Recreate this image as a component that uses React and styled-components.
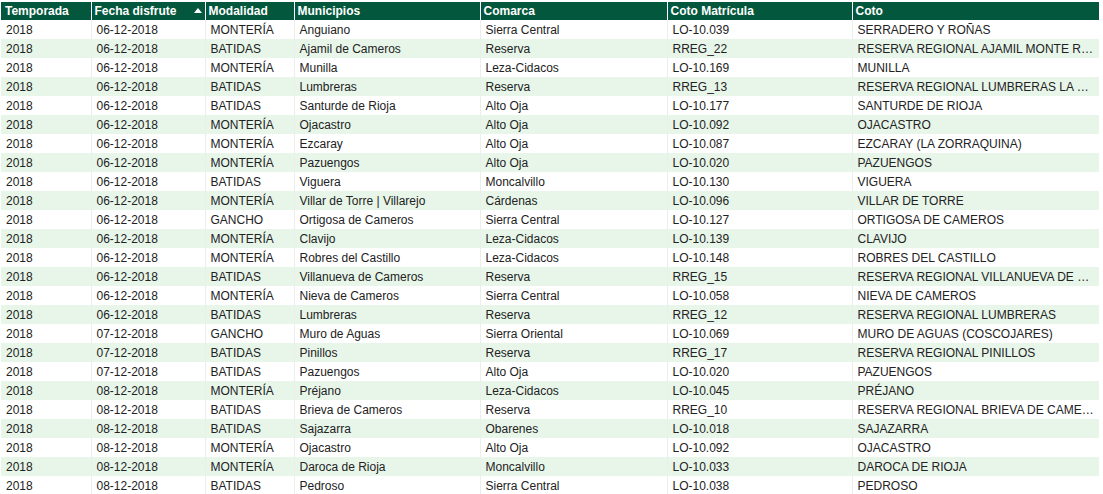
import React from "react";
import styled, { createGlobalStyle } from "styled-components";

const Global = createGlobalStyle`
  html, body { margin: 0; padding: 0; background: #fff; }
  body { font-family: "Liberation Sans", Arial, sans-serif; }
`;

const Wrap = styled.div`
  padding: 2px 4px 0 1px;
`;

const Table = styled.table`
  width: 1098px;
  table-layout: fixed;
  border-collapse: collapse;
  font-size: 12px;
  color: #222;
`;

const HeadCell = styled.th`
  background: #03573c;
  color: #fff;
  font-weight: bold;
  text-align: left;
  height: 18px;
  padding: 0 4px 0 3px;
  border-left: 1px solid #fff;
  white-space: nowrap;
  overflow: hidden;
  position: relative;
  &:first-child { border-left: none; padding-left: 4px; }
`;

const SortArrow = styled.span`
  position: absolute;
  right: 3px;
  top: 6px;
  width: 0;
  height: 0;
  border-left: 4px solid transparent;
  border-right: 4px solid transparent;
  border-bottom: 5px solid #fff;
`;

const Row = styled.tr`
  background: ${(p) => (p.$striped ? "#e8f6ea" : "#fff")};
`;

const Cell = styled.td`
  height: 19px;
  padding: 0 4px 0 5px;
  border-left: 1px solid #eceeec;
  white-space: nowrap;
  overflow: hidden;
  text-overflow: ellipsis;
  &:first-child { border-left: none; }
`;

const cols = [90, 114, 89, 186, 187, 185, 247];
const heads = ["Temporada", "Fecha disfrute", "Modalidad", "Municipios", "Comarca", "Coto Matrícula", "Coto"];

const rows = [
  ["06-12-2018", "MONTERÍA", "Anguiano", "Sierra Central", "LO-10.039", "SERRADERO Y ROÑAS"],
  ["06-12-2018", "BATIDAS", "Ajamil de Cameros", "Reserva", "RREG_22", "RESERVA REGIONAL AJAMIL MONTE REAL"],
  ["06-12-2018", "MONTERÍA", "Munilla", "Leza-Cidacos", "LO-10.169", "MUNILLA"],
  ["06-12-2018", "BATIDAS", "Lumbreras", "Reserva", "RREG_13", "RESERVA REGIONAL LUMBRERAS LA PAZ"],
  ["06-12-2018", "BATIDAS", "Santurde de Rioja", "Alto Oja", "LO-10.177", "SANTURDE DE RIOJA"],
  ["06-12-2018", "MONTERÍA", "Ojacastro", "Alto Oja", "LO-10.092", "OJACASTRO"],
  ["06-12-2018", "MONTERÍA", "Ezcaray", "Alto Oja", "LO-10.087", "EZCARAY (LA ZORRAQUINA)"],
  ["06-12-2018", "MONTERÍA", "Pazuengos", "Alto Oja", "LO-10.020", "PAZUENGOS"],
  ["06-12-2018", "BATIDAS", "Viguera", "Moncalvillo", "LO-10.130", "VIGUERA"],
  ["06-12-2018", "MONTERÍA", "Villar de Torre | Villarejo", "Cárdenas", "LO-10.096", "VILLAR DE TORRE"],
  ["06-12-2018", "GANCHO", "Ortigosa de Cameros", "Sierra Central", "LO-10.127", "ORTIGOSA DE CAMEROS"],
  ["06-12-2018", "MONTERÍA", "Clavijo", "Leza-Cidacos", "LO-10.139", "CLAVIJO"],
  ["06-12-2018", "MONTERÍA", "Robres del Castillo", "Leza-Cidacos", "LO-10.148", "ROBRES DEL CASTILLO"],
  ["06-12-2018", "BATIDAS", "Villanueva de Cameros", "Reserva", "RREG_15", "RESERVA REGIONAL VILLANUEVA DE CAMEROS"],
  ["06-12-2018", "MONTERÍA", "Nieva de Cameros", "Sierra Central", "LO-10.058", "NIEVA DE CAMEROS"],
  ["06-12-2018", "BATIDAS", "Lumbreras", "Reserva", "RREG_12", "RESERVA REGIONAL LUMBRERAS"],
  ["07-12-2018", "GANCHO", "Muro de Aguas", "Sierra Oriental", "LO-10.069", "MURO DE AGUAS (COSCOJARES)"],
  ["07-12-2018", "BATIDAS", "Pinillos", "Reserva", "RREG_17", "RESERVA REGIONAL PINILLOS"],
  ["07-12-2018", "BATIDAS", "Pazuengos", "Alto Oja", "LO-10.020", "PAZUENGOS"],
  ["08-12-2018", "MONTERÍA", "Préjano", "Leza-Cidacos", "LO-10.045", "PRÉJANO"],
  ["08-12-2018", "BATIDAS", "Brieva de Cameros", "Reserva", "RREG_10", "RESERVA REGIONAL BRIEVA DE CAMEROS"],
  ["08-12-2018", "BATIDAS", "Sajazarra", "Obarenes", "LO-10.018", "SAJAZARRA"],
  ["08-12-2018", "MONTERÍA", "Ojacastro", "Alto Oja", "LO-10.092", "OJACASTRO"],
  ["08-12-2018", "MONTERÍA", "Daroca de Rioja", "Moncalvillo", "LO-10.033", "DAROCA DE RIOJA"],
  ["08-12-2018", "BATIDAS", "Pedroso", "Sierra Central", "LO-10.038", "PEDROSO"],
];

export default function App() {
  return (
    <Wrap>
      <Global />
      <Table>
        <colgroup>
          {cols.map((w, i) => (
            <col key={i} style={{ width: w }} />
          ))}
        </colgroup>
        <thead>
          <tr>
            {heads.map((h, i) => (
              <HeadCell key={h}>
                {h}
                {i === 1 && <SortArrow />}
              </HeadCell>
            ))}
          </tr>
        </thead>
        <tbody>
          {rows.map((r, i) => (
            <Row key={i} $striped={i % 2 === 1}>
              <Cell>2018</Cell>
              {r.map((c, j) => (
                <Cell key={j}>{c}</Cell>
              ))}
            </Row>
          ))}
        </tbody>
      </Table>
    </Wrap>
  );
}
